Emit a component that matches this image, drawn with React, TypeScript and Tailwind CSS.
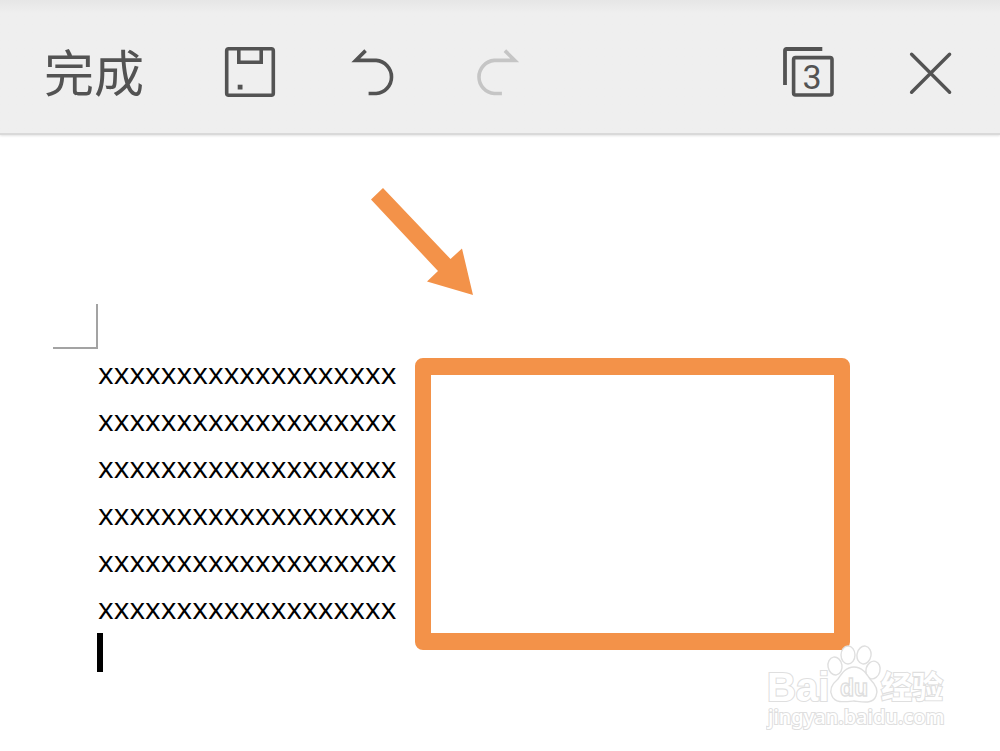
import type { ButtonHTMLAttributes, ReactNode } from "react";

const LINES = Array.from({ length: 6 }, () => "x".repeat(19));

interface ToolButtonProps extends ButtonHTMLAttributes<HTMLButtonElement> {
  label: string;
  children: ReactNode;
}

function ToolButton({ label, children, ...rest }: ToolButtonProps) {
  return (
    <button
      type="button"
      aria-label={label}
      className="flex size-13 items-center justify-center text-[#535353] disabled:text-[#c5c5c5]"
      {...rest}
    >
      {children}
    </button>
  );
}

function SaveIcon() {
  return (
    <svg viewBox="0 0 52 52" className="size-13" fill="none" stroke="currentColor">
      <rect x="2.7" y="2.7" width="46.6" height="46.6" rx="2" strokeWidth="3.6" />
      <path d="M14.8 4v12.2h22.4V4" strokeWidth="3.6" />
      <rect x="13.7" y="38.7" width="4.8" height="4.8" fill="currentColor" stroke="none" />
    </svg>
  );
}

function UndoIcon() {
  return (
    <svg viewBox="0 0 52 52" className="size-13" fill="none" stroke="currentColor">
      <path d="M17.6 4.6 7.7 14.4H28.2a16.6 16.6 0 0 1 0 33.1H20.6" strokeWidth="3.6" />
    </svg>
  );
}

function RedoIcon() {
  return (
    <svg viewBox="0 0 52 52" className="size-13" fill="none" stroke="currentColor">
      <path d="M32.9 4.6 42.8 14.4H22.3a16.6 16.6 0 0 0 0 33.1H29.9" strokeWidth="3.6" />
    </svg>
  );
}

function CloseIcon() {
  return (
    <svg viewBox="0 0 52 52" className="size-13" fill="none" stroke="currentColor">
      <path d="M7.6 8.2 45.6 46.2M45.6 8.2 7.6 46.2" strokeWidth="3.4" strokeLinecap="round" />
    </svg>
  );
}

function PagesIcon({ count }: { count: number }) {
  return (
    <svg viewBox="0 0 52 52" className="size-13" fill="none" stroke="currentColor">
      <path d="M3 39V4.5Q3 3 4.5 3H40.3" strokeWidth="3.8" />
      <rect x="11.6" y="11.6" width="38.4" height="37.4" rx="2" strokeWidth="3.6" />
      <text
        x="30"
        y="43"
        textAnchor="middle"
        fontSize="34"
        fill="currentColor"
        stroke="none"
        className="font-['Roboto',sans-serif]"
      >
        {count}
      </text>
    </svg>
  );
}

function Toolbar() {
  return (
    <header className="flex h-[135px] items-center justify-between border-b-2 border-[#d9d9d9] bg-linear-to-b from-[#e6e6e6] to-[#efefef] to-10% px-11 pt-2.5 shadow-[0_1px_2px_#e4e4e4]">
      <div className="flex items-center">
        <button
          type="button"
          className="mr-20 pb-1 font-['Noto_Sans_CJK_SC',sans-serif] text-[50px] leading-none text-[#535353]"
        >
          完成
        </button>
        <div className="flex items-center gap-[72px]">
          <ToolButton label="保存">
            <SaveIcon />
          </ToolButton>
          <ToolButton label="撤销">
            <UndoIcon />
          </ToolButton>
          <ToolButton label="恢复" disabled>
            <RedoIcon />
          </ToolButton>
        </div>
      </div>
      <div className="flex items-center gap-[70px]">
        <ToolButton label="页面">
          <PagesIcon count={3} />
        </ToolButton>
        <ToolButton label="关闭">
          <CloseIcon />
        </ToolButton>
      </div>
    </header>
  );
}

// Orange arrow and frame pointing at the empty half of the page.
function Callout() {
  return (
    <div className="absolute top-[53px] left-[371px]">
      <svg viewBox="0 0 102 107" className="h-[107px] w-[102px]" fill="#f39249">
        <path d="M0 11.5 12 0 79.5 71 91 60.5 102 107 56 93.5 67 83Z" />
      </svg>
      <div className="mt-[63px] ml-11 h-[292px] w-[435px] rounded-lg border-x-[16px] border-y-[17px] border-[#f39249]" />
    </div>
  );
}

function Watermark() {
  return (
    <div className="absolute right-[50px] bottom-4">
      <svg viewBox="0 0 184 90" className="h-[90px] w-[184px]" fill="#fff" stroke="#dfdfdf" strokeWidth="1.4">
        <g strokeWidth="2.2" style={{ paintOrder: "stroke" }}>
          <text x="1" y="56" fontSize="40" fontWeight="700" className="font-['Liberation_Sans',sans-serif]">
            Bai
          </text>
          <text x="115" y="53" fontSize="31" fontWeight="700" className="font-['Noto_Sans_CJK_SC',sans-serif]">
            经验
          </text>
          <text x="2" y="79" fontSize="20" fontWeight="500" className="font-['Noto_Sans',sans-serif]">
            jingyan.baidu.com
          </text>
        </g>
        <ellipse cx="69" cy="21" rx="7" ry="9" transform="rotate(-10 69 21)" />
        <ellipse cx="82" cy="10" rx="7" ry="9" />
        <ellipse cx="98" cy="10" rx="7" ry="9" transform="rotate(10 98 10)" />
        <ellipse cx="107" cy="25" rx="7" ry="9" transform="rotate(15 107 25)" />
        <path d="M88 22C80 22 76 28 72 34 66 39 63 45 66 51 69 58 77 57 88 56 98 57 107 59 110 51 113 45 109 39 104 34 100 28 96 22 88 22Z" />
        <text x="74" y="51" fontSize="23" fontWeight="700" className="font-['Liberation_Sans',sans-serif]">
          du
        </text>
      </svg>
    </div>
  );
}

export default function App() {
  return (
    <div className="flex min-h-screen flex-col bg-white">
      <Toolbar />
      <main className="relative flex-1 overflow-hidden pt-[169px] pb-16 pl-[53px]">
        <div className="size-[45px] border-r-2 border-b-2 border-[#a3a3a3]" />
        <div className="ml-11 font-['Open_Sans',sans-serif] text-[30px] leading-[47px] text-black">
          {LINES.map((line, i) => (
            <p key={i} className="pl-px">
              {line}
            </p>
          ))}
          <div className="mt-0.5 h-[39px] w-[6px] bg-black" />
        </div>
        <Callout />
        <Watermark />
      </main>
    </div>
  );
}
